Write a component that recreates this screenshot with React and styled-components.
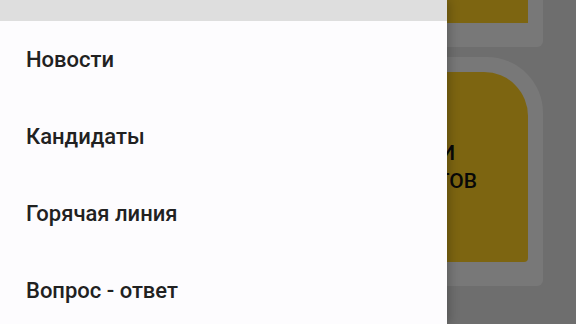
import React from 'react';
import styled, { createGlobalStyle } from 'styled-components';

const GlobalStyle = createGlobalStyle`
  html, body {
    margin: 0;
    padding: 0;
    width: 576px;
    height: 324px;
    overflow: hidden;
  }
  body {
    font-family: Roboto, "Noto Sans", sans-serif;
  }
`;

const menu = ['Новости', 'Кандидаты', 'Горячая линия', 'Вопрос - ответ'];

const App = () => {
  return (
    <>
      <GlobalStyle />
      <Screen>
        <Page>
          <Card>
            <Tile $height={200} />
          </Card>
          <Card $rounded>
            <Tile $height={190} $rounded>
              <Caption>
                <CaptionLine $inset={22}>ВЫБОРЫ И</CaptionLine>
                <CaptionLine>КАНДИДАТОВ</CaptionLine>
              </Caption>
            </Tile>
          </Card>
        </Page>
        <Scrim />
        <Drawer>
          <DrawerHeader />
          <Menu>
            {menu.map((item) => (
              <MenuItem key={item}>{item}</MenuItem>
            ))}
          </Menu>
        </Drawer>
      </Screen>
    </>
  );
};

export default App;

const Screen = styled.div`
  position: relative;
  width: 576px;
  height: 324px;
  overflow: hidden;
  background: #dcdcdc;
`;

const Page = styled.div`
  display: flex;
  flex-direction: column;
  align-items: flex-end;
  gap: 10px;
  padding-right: 33px;
  margin-top: -192px;
`;

const Card = styled.div`
  width: 300px;
  padding: 15px 15px 24px 15px;
  background: #f0f0f0;
  border-radius: ${(p) => (p.$rounded ? '56px 56px 6px 6px' : '6px')};
  box-sizing: border-box;
`;

const Tile = styled.div`
  height: ${(p) => p.$height}px;
  background: #fbca22;
  border-radius: ${(p) => (p.$rounded ? '44px 44px 4px 4px' : '0')};
  display: flex;
  align-items: center;
  justify-content: flex-end;
`;

const Caption = styled.div`
  display: flex;
  flex-direction: column;
  align-items: flex-end;
  padding-right: 51px;
  font-size: 21px;
  font-weight: 500;
  line-height: 28px;
  color: #111;
`;

const CaptionLine = styled.span`
  white-space: nowrap;
  margin-right: ${(p) => p.$inset || 0}px;
`;

const Scrim = styled.div`
  position: absolute;
  inset: 0;
  background: rgba(0, 0, 0, 0.5);
`;

const Drawer = styled.nav`
  position: absolute;
  top: 0;
  left: 0;
  bottom: 0;
  width: 447px;
  background: #fdfcfe;
  box-shadow: 2px 0 10px rgba(0, 0, 0, 0.25);
`;

const DrawerHeader = styled.div`
  height: 21px;
  background: #dedede;
`;

const Menu = styled.ul`
  list-style: none;
  margin: 0;
  padding: 0;
`;

const MenuItem = styled.li`
  height: 77px;
  display: flex;
  align-items: center;
  padding-left: 26px;
  font-size: 22px;
  font-weight: 500;
  color: #212121;
`;
